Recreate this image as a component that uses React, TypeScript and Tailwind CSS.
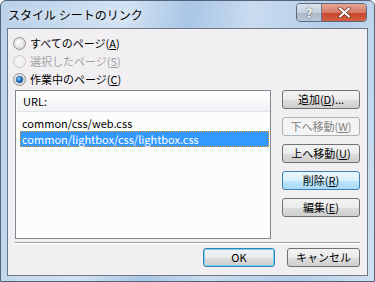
import type { ReactNode } from 'react'

function Radio({checked, disabled}: {checked?: boolean; disabled?: boolean}) {
  return (
    <svg width="13" height="13" viewBox="0 0 13 13" className="shrink-0">
      <defs>
        <radialGradient id="rin" cx="0.35" cy="0.3" r="0.8">
          <stop offset="0" stopColor="#ffffff"/>
          <stop offset="1" stopColor="#dcdcdc"/>
        </radialGradient>
        <radialGradient id="dot" cx="0.4" cy="0.35" r="0.7">
          <stop offset="0" stopColor="#8fd3ff"/>
          <stop offset="0.6" stopColor="#1b72c8"/>
          <stop offset="1" stopColor="#0c3f86"/>
        </radialGradient>
      </defs>
      <circle cx="6.5" cy="6.5" r="6" fill={disabled ? '#f4f4f4' : 'url(#rin)'} stroke={disabled ? '#c9c9c9' : '#8e8f8f'} strokeWidth="1"/>
      <circle cx="6.5" cy="6.5" r="4.5" fill="none" stroke={disabled ? '#ececec' : '#d6d6d6'} strokeWidth="1"/>
      {checked && <circle cx="6.5" cy="6.5" r="3.3" fill="url(#dot)" stroke="#1d4f91" strokeWidth="0.6"/>}
    </svg>
  )
}

function Btn({children, w, kind = 'normal'}: {children: ReactNode; w: string; kind?: 'normal' | 'disabled' | 'hot' | 'default'}) {
  const styles = {
    normal: 'border-[#707070] bg-[linear-gradient(#f3f3f3_0%,#ebebeb_50%,#dddddd_51%,#cfcfcf_100%)] text-black',
    disabled: 'border-[#adb2b5] bg-[#f4f4f4] text-[#838383]',
    hot: 'border-[#3c7fb1] bg-[linear-gradient(#eaf6fd_0%,#d9f0fc_50%,#bee6fd_51%,#a7d9f5_100%)] text-black',
    default: 'border-[#3c7fb1] bg-[linear-gradient(#f3f3f3_0%,#ebebeb_50%,#dddddd_51%,#cfcfcf_100%)] text-black shadow-[inset_0_0_0_1px_#6fd3f7]',
  }
  return (
    <div className={`${w} h-[19px] shrink-0 rounded-[3px] border flex items-center justify-center leading-none ${styles[kind]}`}>
      {children}
    </div>
  )
}

export default function App() {
  return (
    <div className="w-[375px] h-[282px] overflow-hidden bg-white font-['Noto_Sans_CJK_JP',sans-serif] text-[11px]">
      <div className="w-[375px] h-[282px] rounded-t-[6px] border border-[#52647a] bg-[linear-gradient(100deg,#b9d1ea_0%,#d3e2f2_30%,#a9c6e6_45%,#c9dbef_60%,#b4cde9_80%,#cfe0f1_100%)] flex flex-col">
        <div className="h-[27px] shrink-0 flex items-start justify-between pl-[7px] pr-[7px]">
          <span className="mt-[5px] text-[12px] text-black [text-shadow:0_0_6px_#ffffff]">スタイル シートのリンク</span>
          <div className="flex mt-[2px] rounded-[4px] overflow-hidden border border-[#5a6a80]">
            <div className="w-[25px] h-[17px] flex items-center justify-center bg-[linear-gradient(#dbe3ec_0%,#c6d1dd_50%,#aab8c8_51%,#b9c6d5_100%)] border-r border-[#6b7b8f]">
              <span className="text-[12px] font-bold text-white leading-none [text-shadow:0_0_2px_#333]">?</span>
            </div>
            <div className="w-[44px] h-[17px] flex items-center justify-center bg-[linear-gradient(#e8a493_0%,#d77a66_50%,#c4432c_51%,#d6603f_100%)]">
              <svg width="13" height="11" viewBox="0 0 13 11">
                <path d="M2 1.5 L11 9.5 M11 1.5 L2 9.5" stroke="#5a2418" strokeWidth="3.4" strokeLinecap="round"/>
                <path d="M2 1.5 L11 9.5 M11 1.5 L2 9.5" stroke="#ffffff" strokeWidth="2.2" strokeLinecap="round"/>
              </svg>
            </div>
          </div>
        </div>
        <div className="mx-[6px] h-[248px] border border-[#6d7886] bg-[#f1eff2] flex flex-col">
          <div className="pt-[5px] pl-[5px] flex flex-col">
            <div className="h-[18px] flex items-center gap-[4px] text-black">
              <Radio/>
              <span>すべてのページ(<u>A</u>)</span>
            </div>
            <div className="h-[18px] flex items-center gap-[4px] text-[#a0a0a0]">
              <Radio disabled/>
              <span>選択したページ(<u>S</u>)</span>
            </div>
            <div className="h-[18px] flex items-center gap-[4px] text-black">
              <Radio checked/>
              <span>作業中のページ(<u>C</u>)</span>
            </div>
          </div>
          <div className="flex mt-[2px] pl-[7px]">
            <div className="w-[256px] h-[149px] border border-[#828790] bg-[#fbfdfb] flex flex-col">
              <div className="h-[21px] ml-[1px] flex items-center pl-[6px] bg-[linear-gradient(#ffffff,#f1f2f4)] border-b border-[#e3e6ea]">
                URL:
              </div>
              <div className="pt-[3px] flex flex-col">
                <div className="h-[16px] flex items-center pl-[6px] text-black">common/css/web.css</div>
                <div className="h-[16px] ml-[4px] mr-[1px] flex items-center pl-[1px] bg-[#3399ff] text-white border border-dotted border-[#f08c2a]">
                  common/lightbox/css/lightbox.css
                </div>
              </div>
            </div>
            <div className="ml-[11px] flex flex-col gap-[8px]">
              <Btn w="w-[78px]"><span>追加(<u>D</u>)...</span></Btn>
              <Btn w="w-[78px]" kind="disabled"><span>下へ移動(<u>W</u>)</span></Btn>
              <Btn w="w-[78px]"><span>上へ移動(<u>U</u>)</span></Btn>
              <Btn w="w-[78px]" kind="hot"><span>削除(<u>R</u>)</span></Btn>
              <Btn w="w-[78px]"><span>編集(<u>E</u>)</span></Btn>
            </div>
          </div>
          <div className="mt-[3px] ml-[7px] mr-[7px] border-t border-[#a0a0a0] border-b border-b-white"/>
          <div className="mt-[4px] pr-[7px] flex justify-end gap-[12px]">
            <Btn w="w-[72px]" kind="default">OK</Btn>
            <Btn w="w-[73px]">キャンセル</Btn>
          </div>
        </div>
      </div>
    </div>
  )
}
